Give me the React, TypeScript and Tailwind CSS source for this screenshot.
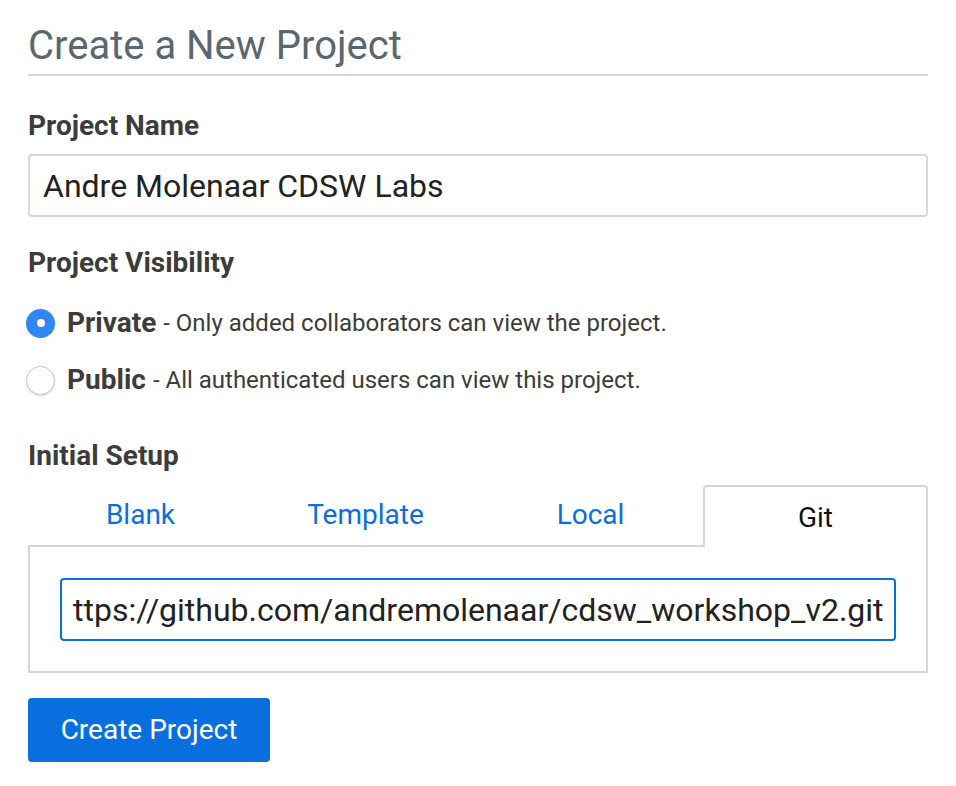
import React from 'react';

const tabs = ['Blank', 'Template', 'Local', 'Git'];

const App: React.FC = () => {
  return (
    <div className="min-h-screen bg-white font-['Roboto',sans-serif] text-[#3a3a3a]">
      <div className="w-[900px] ml-[28px] pt-[20px]">
        <h1 className="text-[40px] leading-[52px] font-normal text-[#5b6670]">Create a New Project</h1>
        <div className="h-[2px] bg-[#d6d6da] mt-[2px]" />

        {/* Project name */}
        <label className="block mt-[34px] text-[28px] leading-[32px] font-bold text-[#3c3c3c]">Project Name</label>
        <div className="mt-[12px] h-[63px] border-2 border-[#d8d8dc] rounded-[4px] flex items-center px-[13px] text-[32px] text-[#222]">
          Andre Molenaar CDSW Labs
        </div>

        {/* Visibility */}
        <label className="block mt-[30px] text-[28px] leading-[32px] font-bold text-[#3c3c3c]">Project Visibility</label>
        <div className="mt-[27px] flex items-center h-[34px] -ml-[2px]">
          <span className="w-[29px] h-[29px] rounded-full bg-[#3187f2] flex items-center justify-center">
            <span className="w-[8px] h-[8px] rounded-full bg-white" />
          </span>
          <span className="ml-[12px] text-[28px] font-bold text-[#3c3c3c]">Private</span>
          <span className="ml-[7px] text-[24px] text-[#3c3c3c]">- Only added collaborators can view the project.</span>
        </div>
        <div className="mt-[23px] flex items-center h-[34px] -ml-[2px]">
          <span className="w-[29px] h-[29px] rounded-full bg-white border border-[#c4c4c4] shadow-[0_1px_2px_rgba(0,0,0,0.15)]" />
          <span className="ml-[12px] text-[28px] font-bold text-[#3c3c3c]">Public</span>
          <span className="ml-[7px] text-[24px] text-[#3c3c3c]">- All authenticated users can view this project.</span>
        </div>

        {/* Initial setup */}
        <label className="block mt-[43px] text-[28px] leading-[32px] font-bold text-[#3c3c3c]">Initial Setup</label>
        <div className="mt-[13px] grid grid-cols-4 h-[62px]">
          {tabs.map((t) =>
            t === 'Git' ? (
              <div
                key={t}
                className="border-2 border-b-0 border-[#d6d6da] rounded-t-[4px] flex items-center justify-center pt-[2px] text-[28px] text-[#111] bg-white"
              >
                {t}
              </div>
            ) : (
              <div
                key={t}
                className="border-b-2 border-[#d6d6da] flex items-center justify-center text-[28px] text-[#0a6fdc]"
              >
                {t}
              </div>
            )
          )}
        </div>
        <div className="border-2 border-t-0 border-[#d6d6da] pt-[31px] pb-[30px] px-[30px]">
          <div className="h-[63px] border-2 border-[#0a6fdc] rounded-[4px] flex items-center px-[11px] text-[32px] text-[#222] overflow-hidden whitespace-nowrap">
            ttps://github.com/andremolenaar/cdsw_workshop_v2.git
          </div>
        </div>

        <button className="mt-[25px] w-[242px] h-[64px] rounded-[4px] bg-[#0a6fde] text-white text-[28px]">
          Create Project
        </button>
      </div>
    </div>
  );
};

export default App;
